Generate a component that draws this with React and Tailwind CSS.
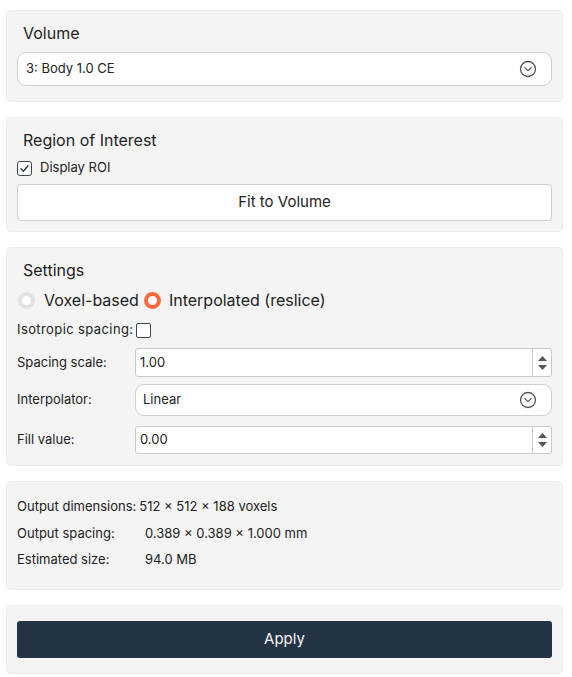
import { useState } from 'react'

function ChevronCircle() {
  return (
    <svg width="18" height="18" viewBox="0 0 18 18" fill="none" stroke="#555" strokeWidth="1.3">
      <circle cx="9" cy="9" r="7.5" />
      <path d="M5.8 7.6 L9 10.6 L12.2 7.6" strokeLinecap="round" strokeLinejoin="round" />
    </svg>
  )
}

function Spinner() {
  return (
    <div className="flex w-[19px] flex-col items-center justify-center gap-[4px] border-l border-[#c9c9c9]">
      <svg width="9" height="5" viewBox="0 0 9 5">
        <path d="M0 5 L4.5 0 L9 5 Z" fill="#555" />
      </svg>
      <svg width="9" height="5" viewBox="0 0 9 5">
        <path d="M0 0 L9 0 L4.5 5 Z" fill="#555" />
      </svg>
    </div>
  )
}

function NumberField({ value, height }) {
  return (
    <div className={`flex ${height} flex-1 rounded-[3px] border border-[#c9c9c9] bg-white`}>
      <div className="flex flex-1 items-center pl-[4px] text-[13px] text-[#222]">{value}</div>
      <Spinner />
    </div>
  )
}

function SelectField({ value, height, pad }) {
  return (
    <div className={`flex ${height} flex-1 items-center justify-between rounded-[9px] border border-[#cfcfcf] bg-white ${pad} pr-[14px] text-[13px] text-[#222]`}>
      <span>{value}</span>
      <ChevronCircle />
    </div>
  )
}

export default function App() {
  const [roi, setRoi] = useState(true)
  const [iso, setIso] = useState(false)
  const [mode, setMode] = useState('interp')

  return (
    <div className="flex min-h-screen flex-col gap-[15px] bg-white pb-[4px] pl-[6px] pr-[9px] pt-[10px] font-['Inter',sans-serif] text-[#222]">
      {/* Volume */}
      <div className="rounded-[5px] border border-[#ececec] bg-[#f4f4f4] px-[10px] pb-[15px] pt-[11px]">
        <div className="pl-[6px] text-[16px] leading-[22px]">Volume</div>
        <div className="mt-[8px] flex">
          <SelectField value="3: Body 1.0 CE" height="h-[34px]" pad="pl-[8px]" />
        </div>
      </div>

      {/* Region of Interest */}
      <div className="rounded-[5px] border border-[#ececec] bg-[#f4f4f4] px-[10px] pb-[10px] pt-[11px]">
        <div className="pl-[6px] text-[16px] leading-[22px]">Region of Interest</div>
        <label className="mt-[7px] flex h-[20px] items-center gap-[8px] text-[13px]">
          <span
            onClick={() => setRoi(!roi)}
            className="flex h-[15px] w-[15px] items-center justify-center rounded-[3px] border-[1.5px] border-[#3a4656] bg-white"
          >
            {roi && (
              <svg width="11" height="11" viewBox="0 0 11 11" fill="none" stroke="#2c3746" strokeWidth="1.4">
                <path d="M2 5.8 L4.4 8.2 L9 2.8" strokeLinecap="round" strokeLinejoin="round" />
              </svg>
            )}
          </span>
          Display ROI
        </label>
        <button className="mt-[6px] flex h-[37px] w-full items-center justify-center rounded-[4px] border border-[#cfcfcf] bg-white text-[15px] text-[#222]">
          Fit to Volume
        </button>
      </div>

      {/* Settings */}
      <div className="rounded-[5px] border border-[#ececec] bg-[#f4f4f4] px-[10px] pb-[11px] pt-[11px]">
        <div className="pl-[6px] text-[16px] leading-[22px]">Settings</div>
        <div className="mt-[9px] flex h-[20px] items-center text-[16px]">
          <span
            onClick={() => setMode('voxel')}
            className={`ml-[1px] mr-[9px] h-[17px] w-[17px] rounded-full bg-white ${mode === 'voxel' ? 'border-[4px] border-[#ff6a3d]' : 'border-[4px] border-[#e2e2e2]'}`}
          />
          <span>Voxel-based</span>
          <span
            onClick={() => setMode('interp')}
            className={`ml-[5px] mr-[8px] h-[17px] w-[17px] rounded-full bg-white ${mode === 'interp' ? 'border-[4px] border-[#ff6a3d]' : 'border-[4px] border-[#e2e2e2]'}`}
          />
          <span>Interpolated (reslice)</span>
        </div>
        <div className="mt-[11px] flex h-[18px] items-center text-[13px]">
          <span className="tracking-[0.4px]">Isotropic spacing:</span>
          <span
            onClick={() => setIso(!iso)}
            className={`ml-[2px] h-[15px] w-[15px] rounded-[2px] border-[1.5px] border-[#3a4656] ${iso ? 'bg-[#3a4656]' : 'bg-white'}`}
          />
        </div>
        <div className="mt-[9px] flex items-center">
          <span className="w-[118px] text-[13px]">Spacing scale:</span>
          <NumberField value="1.00" height="h-[29px]" />
        </div>
        <div className="mt-[7px] flex items-center">
          <span className="w-[118px] text-[13px]">Interpolator:</span>
          <SelectField value="Linear" height="h-[32px]" pad="pl-[7px]" />
        </div>
        <div className="mt-[10px] flex items-center">
          <span className="w-[118px] text-[13px]">Fill value:</span>
          <NumberField value="0.00" height="h-[28px]" />
        </div>
      </div>

      {/* Output info */}
      <div className="rounded-[5px] border border-[#ececec] bg-[#f4f4f4] px-[10px] pb-[16px] pt-[12px] text-[13px]">
        <div className="flex h-[26px] items-center">
          <span className="mr-[3px]">Output dimensions:</span>
          <span>512 × 512 × 188 voxels</span>
        </div>
        <div className="flex h-[27px] items-center">
          <span className="w-[128px]">Output spacing:</span>
          <span>0.389 × 0.389 × 1.000 mm</span>
        </div>
        <div className="flex h-[26px] items-center">
          <span className="w-[128px]">Estimated size:</span>
          <span>94.0 MB</span>
        </div>
      </div>

      {/* Apply */}
      <div className="rounded-[5px] border border-[#ececec] bg-[#f4f4f4] px-[10px] py-[15px]">
        <button className="flex h-[37px] w-full items-center justify-center rounded-[3px] bg-[#243444] text-[15px] text-[#f2f2f2]">
          Apply
        </button>
      </div>
    </div>
  )
}
